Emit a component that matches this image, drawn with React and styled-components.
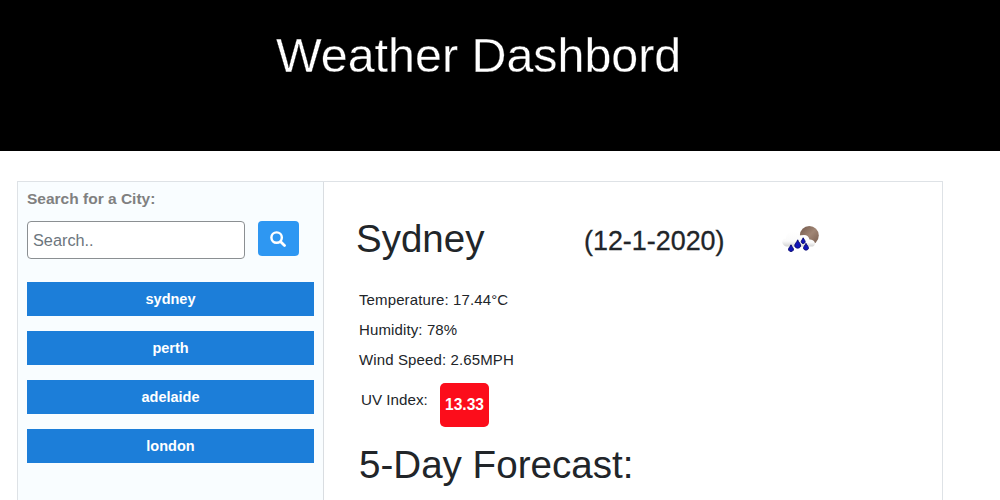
import React from "react";
import styled, { createGlobalStyle } from "styled-components";

const GlobalStyle = createGlobalStyle`
  * { box-sizing: border-box; }
  html, body { margin: 0; height: 500px; overflow: hidden; background: #fff; }
  body { font-family: "Liberation Sans", Arial, sans-serif; color: #212529; }
`;

const Page = styled.div`
  height: 500px;
  overflow: hidden;
`;

const Header = styled.header`
  height: 151px;
  padding: 27px 0 0 276px;
  background: #000;
`;

const Title = styled.h1`
  margin: 0;
  font-size: 48.4px;
  line-height: 56px;
  font-weight: 400;
  color: #fff;
  white-space: nowrap;
  -webkit-text-stroke: 0.3px #000;
`;

const Panel = styled.main`
  display: flex;
  width: 926px;
  height: 420px;
  margin: 30px 0 0 17px;
  border: 1px solid #dee2e6;
`;

const Sidebar = styled.aside`
  flex: 0 0 306px;
  padding: 8px 9px 0;
  background: #f9fdff;
  border-right: 1px solid #d9dde1;
`;

const Label = styled.label`
  display: block;
  font-size: 15.5px;
  line-height: 18px;
  font-weight: 700;
  color: #808080;
`;

const SearchRow = styled.div`
  display: flex;
  gap: 13px;
  margin-top: 13px;
`;

const SearchInput = styled.input`
  width: 218px;
  height: 38px;
  padding: 0 5px;
  border: 1px solid #8b8f92;
  border-radius: 4px;
  background: #fff;
  font: 16.3px "Liberation Sans", Arial, sans-serif;
  outline: none;
  &::placeholder { color: #6c757d; opacity: 1; }
`;

const SearchButton = styled.button`
  display: flex;
  align-items: center;
  justify-content: center;
  width: 41px;
  height: 35px;
  padding: 1px 2px 0 0;
  border: 0;
  border-radius: 4px;
  background: #2e97f2;
  color: #fff;
`;

const CityList = styled.div`
  display: flex;
  flex-direction: column;
  gap: 15px;
  margin-top: 23px;
`;

const CityButton = styled.button`
  height: 34px;
  padding: 0 0 1px;
  border: 0;
  background: #1c7ed9;
  color: #fff;
  font: 700 14.5px/20px "Liberation Sans", Arial, sans-serif;
`;

const Content = styled.section`
  flex: 1;
  padding: 34px 0 0 35px;
`;

const Heading = styled.div`
  display: grid;
  grid-template-columns: 227px 198px auto;
  align-items: center;
  height: 46px;
  margin-left: -3px;
`;

const City = styled.h2`
  margin: 0;
  font-size: 38.5px;
  line-height: 46px;
  font-weight: 400;
`;

const DateText = styled.h3`
  margin: 4px 0 0 1px;
  font-size: 26.9px;
  line-height: 32px;
  font-weight: 400;
  -webkit-text-stroke: 0.3px #212529;
`;

const Reading = styled.p`
  margin: 0;
  font-size: 15px;
  letter-spacing: 0.12px;
  line-height: 30px;
`;

const Readings = styled.div`
  margin-top: 23px;
`;

const UvRow = styled.div`
  display: flex;
  margin: 8px 0 0 2px;
  gap: 12px;
`;

const UvLabel = styled.span`
  width: 67px;
  padding-top: 8px;
  font-size: 15.2px;
  line-height: 18px;
  white-space: nowrap;
`;

const UvBadge = styled.span`
  width: 49px;
  height: 44px;
  border-radius: 5px;
  background: #fc0d1b;
  color: #fff;
  font-size: 15.6px;
  font-weight: 700;
  line-height: 44px;
  text-align: center;
`;

const Forecast = styled(City)`
  margin-top: 15px;
  font-size: 38.6px;
`;

const SearchIcon = () => (
  <svg width="16" height="16" viewBox="0 0 15 15" fill="none" stroke="currentColor" aria-hidden="true">
    <circle cx="6.2" cy="6.2" r="4.9" strokeWidth="2.3" />
    <path d="M10 10l3.600 3.600" strokeWidth="2.6" strokeLinecap="round" />
  </svg>
);

const RainIcon = () => (
  <svg width="42" height="34" viewBox="0 0 42 34" aria-label="Rain">
    <defs>
      <linearGradient id="moon" x1="0" y1="0" x2="1" y2="1">
        <stop offset="0" stopColor="#6f5548" />
        <stop offset="0.5" stopColor="#a18675" />
        <stop offset="1" stopColor="#765b4d" />
      </linearGradient>
      <linearGradient id="cloud" x1="0" y1="0" x2="0" y2="1">
        <stop offset="0" stopColor="#fff" />
        <stop offset="0.65" stopColor="#fafafa" />
        <stop offset="1" stopColor="#d3d3d3" />
      </linearGradient>
    </defs>
    <circle cx="28.300" cy="13.500" r="9.500" fill="url(#moon)" />
    <path d="M16 24.500c-2-5-1-11.500 7-11.500 3 0 5 2 5.500 4.500 4-.5 8 4 3.500 7Z" fill="url(#cloud)" />
    <path d="M5 24.500c-5-1.500-5-8 0-8 0-8 11-10 14-3 4 0 6 5 4 8 1 2-1 3-3 3Z" fill="url(#cloud)" />
    <g fill="#1115b8" stroke="#07076b" strokeWidth="0.9" transform="translate(1 .3)">
      <path d="M15.700 17.500c1 3 3.500 4 2.800 6.600-.8 2.300-4.800 2.300-5.600 0-.7-2.600 1.800-3.600 2.800-6.600Z" />
      <path d="M21.200 15.500c.8 2 2.400 3 1.900 4.500-.6 1.600-3.200 1.600-3.800 0-.5-1.500 1.100-2.500 1.900-4.500Z" />
      <path d="M9 22.500c.9 2.300 3 3.400 2.400 5.300-.7 1.900-4.100 1.900-4.800 0-.6-1.900 1.500-3 2.400-5.300Z" />
      <path d="M24 21c.9 2.300 3 3.600 2.400 5.400-.7 1.900-4.100 1.900-4.800 0-.6-1.800 1.500-3.100 2.400-5.400Z" />
    </g>
  </svg>
);

const cities = ["sydney", "perth", "adelaide", "london"];

export default function App() {
  return (
    <Page>
      <GlobalStyle />
      <Header>
        <Title>Weather Dashbord</Title>
      </Header>
      <Panel>
        <Sidebar>
          <Label htmlFor="city">Search for a City:</Label>
          <SearchRow>
            <SearchInput id="city" placeholder="Search.." />
            <SearchButton aria-label="Search">
              <SearchIcon />
            </SearchButton>
          </SearchRow>
          <CityList>
            {cities.map((c) => (
              <CityButton key={c}>{c}</CityButton>
            ))}
          </CityList>
        </Sidebar>
        <Content>
          <Heading>
            <City>Sydney</City>
            <DateText>(12-1-2020)</DateText>
            <RainIcon />
          </Heading>
          <Readings>
            <Reading>Temperature: 17.44°C</Reading>
            <Reading>Humidity: 78%</Reading>
            <Reading>Wind Speed: 2.65MPH</Reading>
          </Readings>
          <UvRow>
            <UvLabel>UV Index:</UvLabel>
            <UvBadge>13.33</UvBadge>
          </UvRow>
          <Forecast>5-Day Forecast:</Forecast>
        </Content>
      </Panel>
    </Page>
  );
}
